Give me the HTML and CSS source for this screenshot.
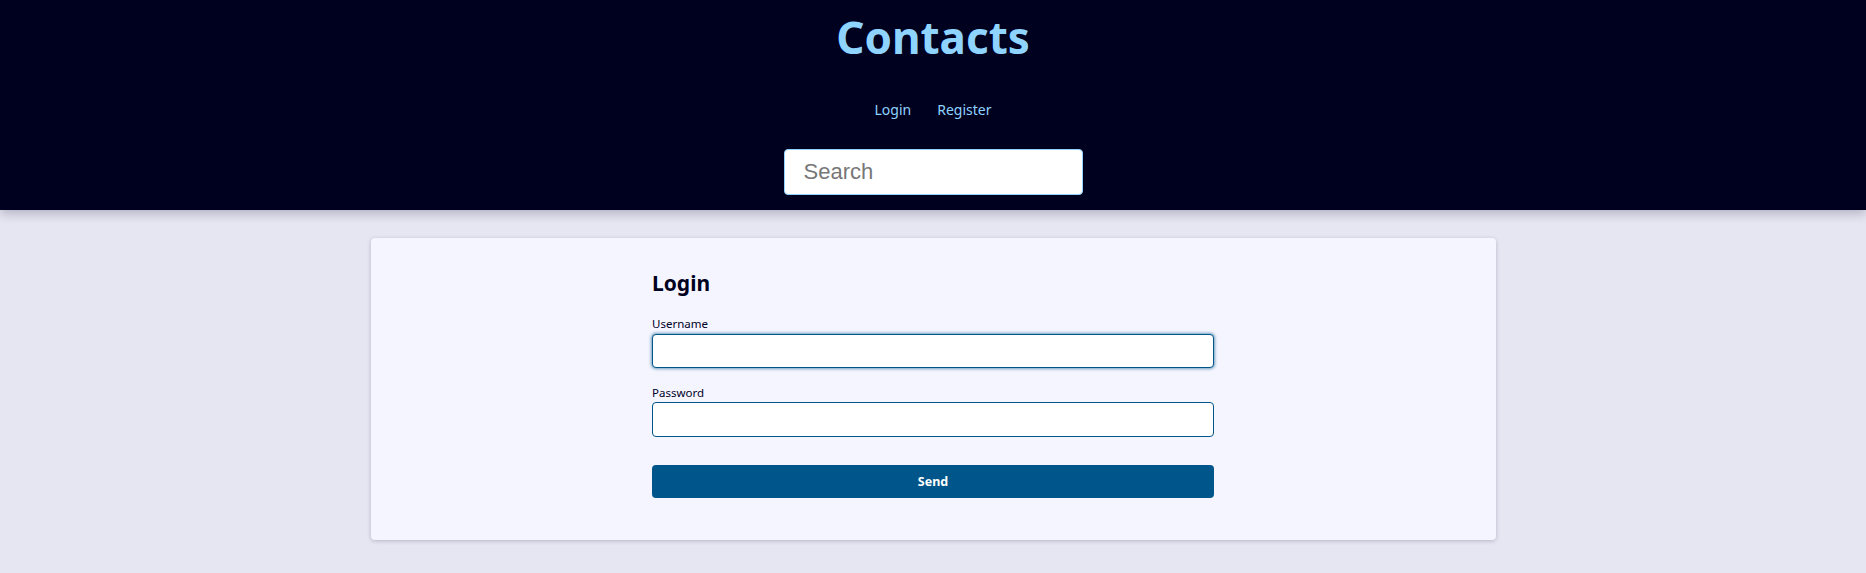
FILE: index.html
```html
<!DOCTYPE html>
<html lang="en">
<head>
<meta charset="utf-8">
<title>Contacts</title>
<link rel="stylesheet" href="styles.css">
</head>
<body>
<header class="site-header">
  <h1 class="site-title">Contacts</h1>
  <nav class="site-nav">
    <a href="#" class="nav-link">Login</a>
    <a href="#" class="nav-link">Register</a>
  </nav>
  <input class="search" type="text" placeholder="Search">
</header>
<main class="main">
  <section class="card">
    <form class="form">
      <h2 class="form-title">Login</h2>
      <label class="label" for="username">Username</label>
      <input class="field field-focus" id="username" type="text">
      <label class="label label-spaced" for="password">Password</label>
      <input class="field field-tall" id="password" type="password">
      <button class="button" type="button">Send</button>
    </form>
  </section>
</main>
</body>
</html>
```
FILE: styles.css
```css
* { box-sizing: border-box; }
html, body { margin: 0; padding: 0; }
body {
  background: #e6e6f3;
  font-family: "Noto Sans", "Open Sans", sans-serif;
  height: 573px;
  overflow: hidden;
}
.site-header {
  background: #00001f;
  height: 210px;
  padding-top: 10px;
  display: flex;
  flex-direction: column;
  align-items: center;
  box-shadow: 0 4px 10px rgba(0, 0, 30, 0.22);
  position: relative;
}
.site-title {
  margin: 0;
  font-size: 44px;
  line-height: 54px;
  font-weight: 700;
  color: #8fd4ff;
}
.site-nav {
  margin-top: 36px;
  display: flex;
  gap: 26px;
  height: 20px;
  align-items: center;
}
.nav-link {
  color: #8fd4ff;
  text-decoration: none;
  font-size: 14px;
  line-height: 20px;
}
.search {
  margin-top: 29px;
  width: 299px;
  height: 46px;
  border: 1px solid #8fd4ff;
  border-radius: 4px;
  background: #fff;
  padding: 0 19px;
  font-family: "Liberation Sans", Arial, sans-serif;
  font-size: 22px;
  color: #333;
}
.search::placeholder { color: #777; }
.main {
  padding-top: 28px;
}
.card {
  width: 1125px;
  height: 302px;
  margin: 0 auto;
  background: #f4f5fe;
  border-radius: 4px;
  box-shadow: 0 1px 4px rgba(0, 0, 40, 0.22);
  padding-top: 30px;
}
.form {
  width: 562px;
  margin: 0 auto;
  display: flex;
  flex-direction: column;
}
.form-title {
  margin: 0 0 18px;
  font-size: 21px;
  line-height: 30px;
  font-weight: 700;
  color: #00001f;
}
.label {
  font-size: 11.5px;
  line-height: 16px;
  color: #00001f;
  margin-bottom: 2px;
}
.label-spaced { margin-top: 17px; margin-bottom: 1px; }
.field {
  height: 34px;
  border: 1px solid #00558a;
  border-radius: 4px;
  background: #fff;
  font-size: 14px;
  padding: 0 8px;
}
.field-tall { height: 35px; }
.field-focus {
  box-shadow: 0 0 3px 1px rgba(0, 85, 138, 0.55);
  outline: none;
}
.button {
  margin-top: 28px;
  height: 33px;
  border: none;
  border-radius: 4px;
  background: #00558a;
  color: #fff;
  font-family: "Noto Sans", sans-serif;
  font-weight: 700;
  font-size: 12.5px;
  cursor: pointer;
}
```
